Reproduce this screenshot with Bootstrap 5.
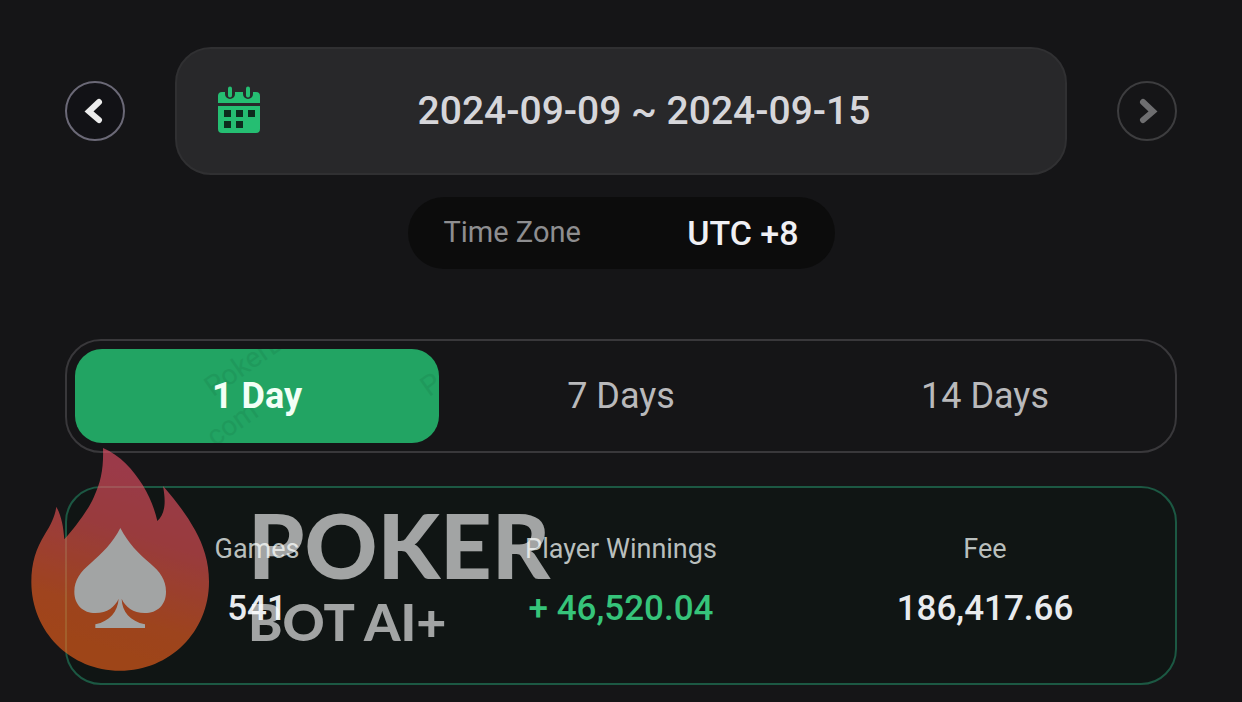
<!DOCTYPE html>
<html lang="en">
<head>
<meta charset="utf-8">
<meta name="viewport" content="width=device-width, initial-scale=1">
<title>Statistics</title>
<link href="https://cdn.jsdelivr.net/npm/bootstrap@5.3.0/dist/css/bootstrap.min.css" rel="stylesheet">
<style>
body { background: #151517; font-family: Roboto, "Liberation Sans", sans-serif; }
.page { padding: 47px 65px 16px; }
.round-btn { width: 60px; height: 60px; border: 2px solid #6b6977; background: #121216; color: #ececec; }
.round-btn:disabled { border-color: #3d3d3f; background: transparent; color: #6e6e70; }
.date-bar { gap: 50px; }
.date-btn { height: 128px; border: 2px solid #303032; border-radius: 36px; background: #28282a; color: #d6d6da; font-size: 39px; font-weight: 500; padding: 0 40px; }
.zone { width: 427px; height: 72px; margin-top: 22px; padding: 0 36px; border-radius: 36px; background: #0c0c0c; }
.zone-name { font-size: 29px; color: #8e8e90; }
.zone-value { font-size: 34px; font-weight: 500; color: #f0f0f4; }
.tabs { margin-top: 70px; height: 114px; padding: 8px; border: 2px solid #39383b; border-radius: 36px; }
.tab-btn { position: relative; overflow: hidden; border: 0; border-radius: 27px; background: transparent; color: #b9b9bb; font-size: 36px; }
.tab-btn.active { background: #22a463; color: #f2fff6; font-weight: 700; }
.tile-text { position: absolute; color: #1f995c; font-size: 28px; font-weight: 400; line-height: 32px; transform: rotate(-35deg); transform-origin: 0 100%; white-space: nowrap; pointer-events: none; }
.tile-a { left: 142px; top: 22px; }
.tile-b { left: 358px; top: 22px; }
.tile-c { left: 138px; top: 76px; }
.summary { position: relative; margin-top: 33px; height: 199px; padding: 43px 8px 0; border: 2px solid #1c5843; border-radius: 36px; background: #101514; }
.summary dt { font-size: 27px; line-height: 36px; font-weight: 400; color: #b9bfbd; }
.summary dd { font-size: 35px; line-height: 48px; margin-top: 18px; font-weight: 500; color: #e8ebee; }
.summary dd.gain { color: #36c47a; }
.brand { position: absolute; left: -37px; top: -41px; gap: 36px; opacity: .61; color: #fff; font-family: Lato, "Open Sans", sans-serif; font-weight: 900; pointer-events: none; }
.brand-top { font-size: 90px; line-height: 90px; margin-top: 52px; }
.brand-sub { font-size: 52px; line-height: 64px; }
</style>
</head>
<body>
<main class="page">
  <div class="date-bar d-flex align-items-center">
    <button class="round-btn rounded-circle p-0 flex-shrink-0 d-flex align-items-center justify-content-center" aria-label="Previous period">
      <svg width="24" height="32" viewBox="0 0 24 32" fill="none" stroke="currentColor" stroke-width="6" stroke-linecap="round"><path d="M16 7 6 16.500 16 25"/></svg>
    </button>
    <button class="date-btn flex-grow-1 d-flex align-items-center">
      <svg width="46" height="52" viewBox="0 0 46 52">
        <path fill="#25be72" d="M5 7H39Q43 7 43 11V18H1V11Q1 7 5 7ZM1 21H43V44Q43 48 39 48H5Q1 48 1 44Z"/>
        <path fill="#28282a" d="M8 1h10v8a5 5 0 0 1-10 0zM26 1h10v8a5 5 0 0 1-10 0z"/>
        <path stroke="#25be72" stroke-width="4" stroke-linecap="round" d="M13 3.500v7M31 3.500v7"/>
        <path fill="#0d2c1d" d="M7 25h7v7H7zM19 25h7v7h-7zM31 25h7v7h-7zM7 36h7v7H7zM19 36h7v7h-7z"/>
      </svg>
      <span class="flex-grow-1 text-center">2024-09-09 ~ 2024-09-15</span>
    </button>
    <button class="round-btn rounded-circle p-0 flex-shrink-0 d-flex align-items-center justify-content-center" aria-label="Next period" disabled>
      <svg width="24" height="32" viewBox="0 0 24 32" fill="none" stroke="currentColor" stroke-width="6" stroke-linecap="round"><path d="M8 7 18 16.500 8 25"/></svg>
    </button>
  </div>

  <div class="zone mx-auto d-flex align-items-center justify-content-between">
    <span class="zone-name">Time Zone</span>
    <span class="zone-value">UTC +8</span>
  </div>

  <div class="tabs d-flex" role="tablist">
    <button class="tab-btn active w-100" role="tab" aria-selected="true">
      <span class="tile-text tile-a" aria-hidden="true">PokerBot</span>
      <span class="tile-text tile-b" aria-hidden="true">P</span>
      <span class="tile-text tile-c" aria-hidden="true">.com</span>
      <span class="position-relative">1 Day</span>
    </button>
    <button class="tab-btn w-100" role="tab" aria-selected="false">7 Days</button>
    <button class="tab-btn w-100" role="tab" aria-selected="false">14 Days</button>
  </div>

  <section class="summary">
    <div class="row g-0 text-center">
      <dl class="col-4 mb-0"><dt>Games</dt><dd class="mb-0">541</dd></dl>
      <dl class="col-4 mb-0"><dt>Player Winnings</dt><dd class="gain mb-0">+ 46,520.04</dd></dl>
      <dl class="col-4 mb-0"><dt>Fee</dt><dd class="mb-0">186,417.66</dd></dl>
    </div>
    <div class="brand d-flex">
      <svg width="182" height="225" viewBox="30 21 546 675" class="flex-shrink-0">
        <defs><linearGradient id="flame" x1=".62" y1=".1" x2=".42" y2=".9"><stop offset="0" stop-color="#f0526a"/><stop offset=".35" stop-color="#f05458"/><stop offset=".8" stop-color="#f76224"/><stop offset="1" stop-color="#f8641c"/></linearGradient></defs>
        <path fill="url(#flame)" d="M249 24C300 45 340 90 368 135C390 172 405 210 412 243C432 225 440 195 429 138C470 185 500 225 525 270C550 315 567 365 567 425C567 575 450 692 300 692C152 692 34 575 34 425C34 370 48 325 75 282C92 255 105 230 109 200C125 230 130 260 133 298C165 262 205 210 222 170C243 125 251 85 249 24Z"/>
        <path fill="#fff" d="M301 264C325 310 355 340 390 370C420 395 438 420 438 455C438 495 412 519 374 519C340 519 315 500 305 476C306 515 330 543 375 553V564H226V553C270 543 293 515 296 476C285 500 262 519 226 519C190 519 163 495 163 455C163 420 182 395 212 370C245 340 278 310 301 264Z"/>
      </svg>
      <div class="text-nowrap">
        <div class="brand-top">POKER</div>
        <div class="brand-sub">BOT AI+</div>
      </div>
    </div>
  </section>
</main>
<script src="https://cdn.jsdelivr.net/npm/bootstrap@5.3.0/dist/js/bootstrap.bundle.min.js"></script>
</body>
</html>
